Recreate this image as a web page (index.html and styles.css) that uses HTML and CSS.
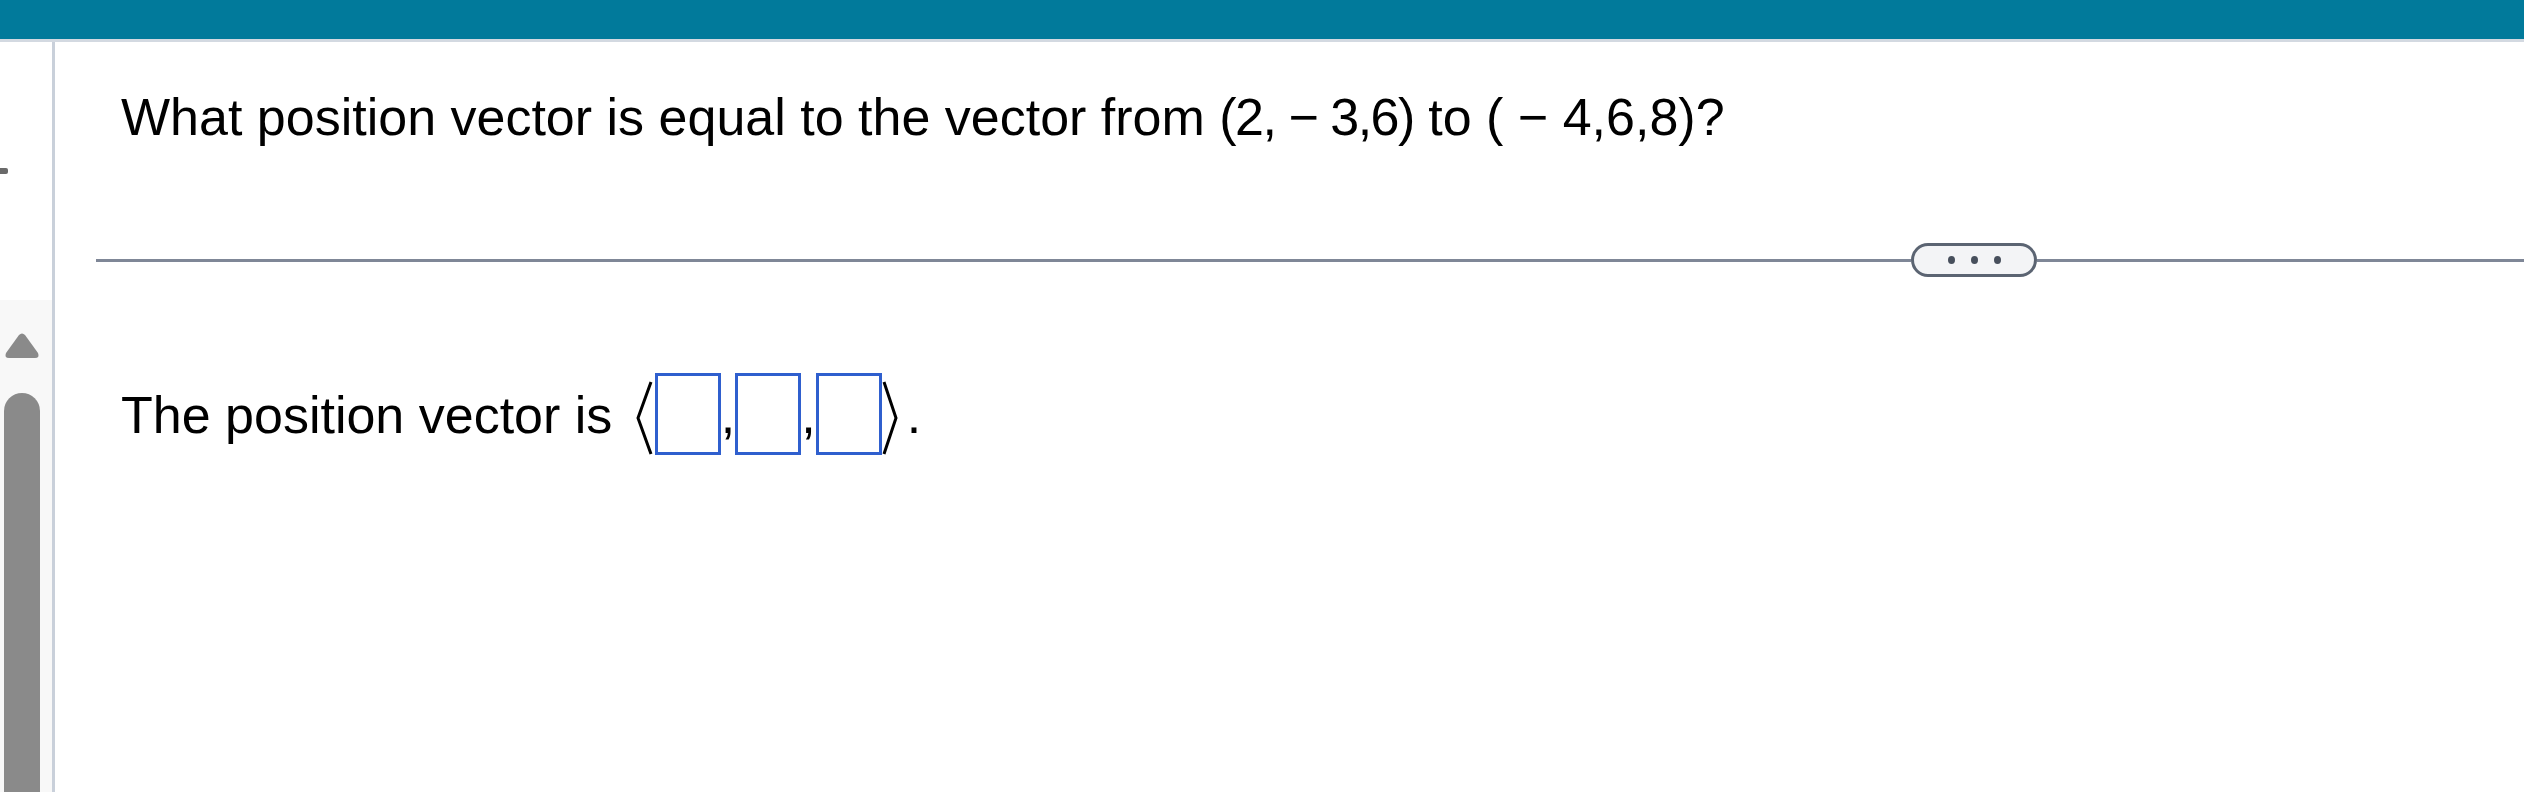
FILE: index.html
```html
<!DOCTYPE html>
<html>
<head>
<meta charset="utf-8">
<link rel="stylesheet" href="styles.css">
</head>
<body>
<header class="topbar"></header>
<div class="main">
  <aside class="sidebar">
    <div class="dash"></div>
    <div class="gutter">
      <svg class="arrow" width="38" height="28" viewBox="0 0 38 28"><path d="M16 3 Q19 0 22 3 L35 21 Q37 26 32 26 L6 26 Q1 26 3 21 Z" fill="#8a8a8a"/></svg>
      <div class="thumb"></div>
    </div>
  </aside>
  <section class="content">
    <p class="question">What position vector is equal to the vector from <span class="m1">(2, − 3,6)</span> to <span class="m2">( − 4,6,8)</span>?</p>
    <div class="divider">
      <div class="line line-left"></div>
      <div class="pill"><span class="dot"></span><span class="dot"></span><span class="dot"></span></div>
      <div class="line line-right"></div>
    </div>
    <p class="answer">The position vector is <svg class="bracket bracket-left" width="18" height="74" viewBox="0 0 18 74"><polyline points="16,1 3,37 16,73" fill="none" stroke="#000" stroke-width="3"/></svg><span class="box"></span>,<span class="box"></span>,<span class="box"></span><svg class="bracket bracket-right" width="16" height="74" viewBox="0 0 16 74"><polyline points="2,1 14,37 2,73" fill="none" stroke="#000" stroke-width="3"/></svg><span class="period">.</span></p>
  </section>
</div>
</body>
</html>
```
FILE: styles.css
```css
html, body {
  margin: 0;
  padding: 0;
  background: #ffffff;
  height: 100%;
}
body {
  font-family: "Liberation Sans", Arial, sans-serif;
  color: #000;
  overflow: hidden;
}
.topbar {
  height: 39px;
  background: #017a9b;
  border-bottom: 3px solid #d3d9e1;
}
.main {
  display: flex;
  height: calc(100% - 42px);
}
.sidebar {
  width: 52px;
  flex: none;
  border-right: 3px solid #c9d0da;
  display: flex;
  flex-direction: column;
}
.dash {
  width: 8px;
  height: 6px;
  background: #6a6a6a;
  border-radius: 0 2px 2px 0;
  margin-top: 126px;
}
.gutter {
  margin-top: 126px;
  flex: 1;
  background: #f8f8f8;
  display: flex;
  flex-direction: column;
  padding-left: 3px;
}
.arrow {
  margin-top: 32px;
  display: block;
}
.thumb {
  margin-top: 33px;
  margin-left: 1px;
  width: 36px;
  flex: 1;
  background: #8a8a8a;
  border-radius: 18px 18px 0 0;
}
.content {
  flex: 1;
  min-width: 0;
}
.question {
  margin: 45px 0 0 66px;
  font-size: 52px;
  line-height: 60px;
  white-space: nowrap;
}
.m1 {
  letter-spacing: -1.5px;
}
.m2 {
  letter-spacing: 0;
}
.divider {
  display: flex;
  align-items: center;
  margin-top: 96px;
  margin-left: 41px;
}
.line {
  height: 3px;
  background: #7f8797;
}
.line-left {
  width: 1815px;
}
.line-right {
  flex: 1;
}
.pill {
  width: 120px;
  height: 28px;
  border: 3px solid #5b6472;
  border-radius: 17px;
  background: #f3f4f6;
  display: flex;
  justify-content: center;
  align-items: center;
  gap: 16px;
}
.dot {
  width: 7px;
  height: 8px;
  border-radius: 50%;
  background: #474f5c;
}
.answer {
  margin: 96px 0 0 66px;
  font-size: 52px;
  line-height: 60px;
  white-space: nowrap;
}
.bracket {
  vertical-align: -22px;
}
.bracket-left {
  margin-left: 8px;
  margin-right: 2px;
}
.bracket-right {
  margin-left: 0;
}
.period {
  margin-left: 9px;
}
.box {
  display: inline-block;
  width: 60px;
  height: 76px;
  border: 3px solid #2f5fce;
  vertical-align: -22px;
}
```
